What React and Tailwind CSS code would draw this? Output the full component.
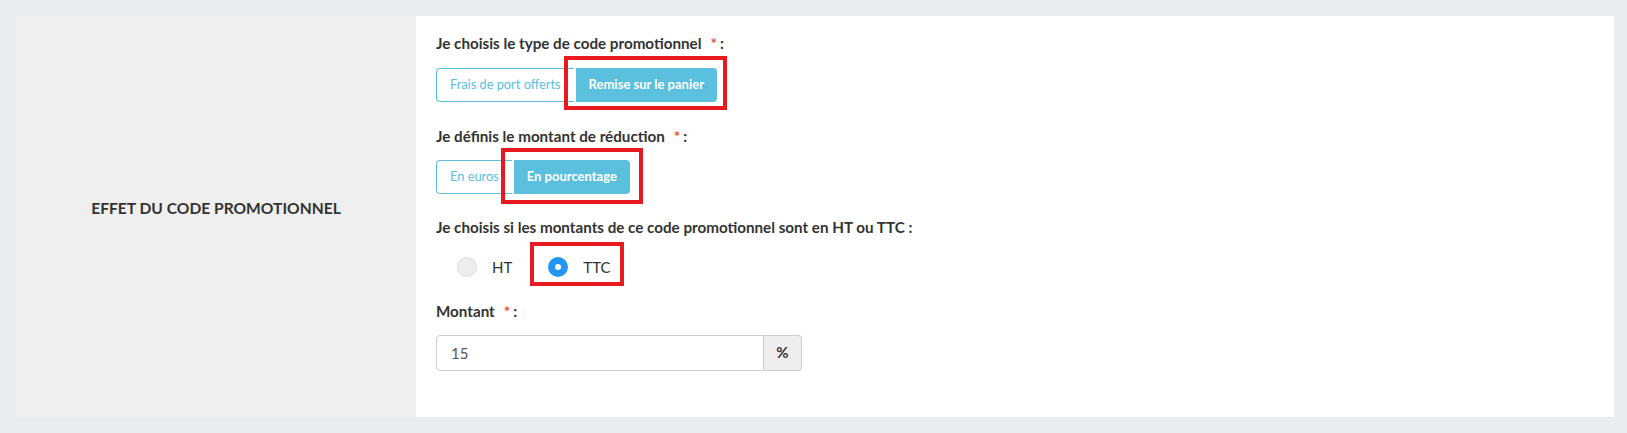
import React from 'react'

function Required() {
	return <span className="ml-[9px] text-[#e74c3c]">*</span>
}

function Label({ children, star = true }) {
	return (
		<div className="text-[15.2px] leading-5 font-bold text-[#333]">
			{children}
			{star && <Required />}
			<span className="ml-[3px]">:</span>
		</div>
	)
}

function Radio({ checked, label }) {
	return (
		<label className="flex items-center">
			<span
				className={`flex h-[20px] w-[20px] items-center justify-center rounded-full ${
					checked ? 'bg-[#2196f3]' : 'border border-[#dcdcdc] bg-[#eeeeee]'
				}`}
			>
				{checked && <span className="h-[6px] w-[6px] rounded-full bg-white" />}
			</span>
			<span className="ml-[15px] text-[15px] text-[#333]">{label}</span>
		</label>
	)
}

function RedBox({ className }) {
	return <span className={`pointer-events-none absolute border-4 border-[#e8191f] ${className}`} />
}

export default function App() {
	return (
		<div className="min-h-[433px] bg-[#e9edf0] pt-4 pb-4 pl-4 pr-[13px] font-['Lato',sans-serif]">
			<div className="flex h-[401px]">
				<div className="flex w-[400px] items-center justify-center bg-[#efefef] pb-4">
					<span className="text-[15.6px] font-bold text-[#333]">
						EFFET DU CODE PROMOTIONNEL
					</span>
				</div>
				<div className="flex-1 bg-white pl-5 pt-[17px]">
					<Label>Je choisis le type de code promotionnel</Label>
					<div className="mt-[15px] flex">
						<button className="h-[34px] rounded-l-[4px] border border-r-0 border-[#5bc0de] bg-white px-[13px] text-[12.8px] text-[#5bc0de]">
							Frais de port offerts
						</button>
						<span className="relative flex">
							<button className="ml-[2px] h-[34px] rounded-r-[4px] bg-[#5bc0de] px-[13px] text-[13px] font-bold text-white">
								Remise sur le panier
							</button>
							<RedBox className="-top-[12px] -bottom-[8px] -left-[10px] -right-[10px]" />
						</span>
					</div>

					<div className="mt-[24px]">
						<Label>Je définis le montant de réduction</Label>
					</div>
					<div className="mt-[14px] flex">
						<button className="h-[34px] rounded-l-[4px] border border-r-0 border-[#5bc0de] bg-white px-[13px] text-[12.8px] text-[#5bc0de]">
							En euros
						</button>
						<span className="relative flex">
							<button className="ml-[2px] h-[34px] rounded-r-[4px] bg-[#5bc0de] px-[13px] text-[13px] font-bold text-white">
								En pourcentage
							</button>
							<RedBox className="-top-[12px] -bottom-[10px] -left-[11px] -right-[13px]" />
						</span>
					</div>

					<div className="mt-[23px] text-[15.2px] leading-5 font-bold text-[#333]">
						Je choisis si les montants de ce code promotionnel sont en HT ou TTC :
					</div>
					<div className="mt-[19px] flex items-center pl-[21px]">
						<Radio label="HT" />
						<span className="relative ml-[36px] flex">
							<Radio checked label="TTC" />
							<RedBox className="-top-[14px] -bottom-[7px] -left-[18px] -right-[13px]" />
						</span>
					</div>

					<div className="mt-[22px]">
						<Label>Montant</Label>
					</div>
					<div className="mt-[14px] flex h-[36px] w-[366px]">
						<input
							readOnly
							value="15"
							className="h-full flex-1 rounded-l-[4px] border border-[#ccc] px-[14px] text-[15px] text-[#555] outline-none"
						/>
						<span className="flex w-[38px] items-center justify-center rounded-r-[4px] border border-l-0 border-[#ccc] bg-[#eee] text-[15px] font-bold text-[#333]">
							%
						</span>
					</div>
				</div>
			</div>
		</div>
	)
}
